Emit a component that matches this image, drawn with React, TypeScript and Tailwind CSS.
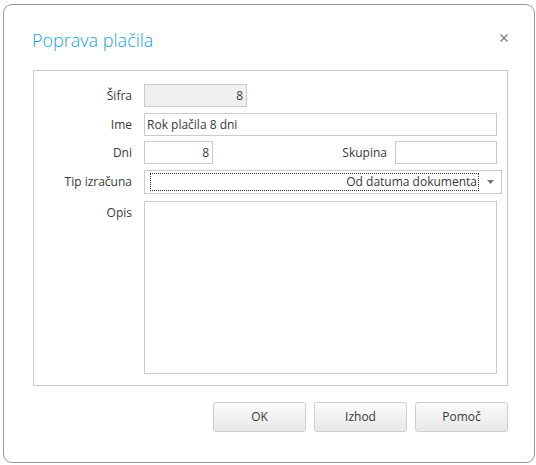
import * as React from 'react';

const font = { fontFamily: '"Open Sans", "Noto Sans", sans-serif' };

function Field({ label, children, className = '' }: { label: string; children: React.ReactNode; className?: string }) {
	return (
		<div className={`flex items-start ${className}`}>
			<div className="w-[99px] shrink-0 pr-[1px] text-right leading-[23px]">{label}</div>
			<div className="ml-[11px] flex w-[353px] items-start">{children}</div>
		</div>
	);
}

function Button({ children }: { children: React.ReactNode }) {
	return (
		<button className="h-[30px] w-[93px] rounded-[3px] border border-[#cfcfcf] bg-gradient-to-b from-[#fbfbfb] to-[#e8e8e8] text-[12px] text-[#3a3a3a]">
			{children}
		</button>
	);
}

export default function App() {
	return (
		<div className="h-[465px] w-[536px] bg-white pl-[3px] pt-[4px] text-[12px] text-[#3a3a3a]" style={font}>
			<div className="flex h-[459px] w-[532px] flex-col rounded-[9px] border border-[#9a9a9a] bg-white">
				{/* header */}
				<div className="flex h-[65px] items-start justify-between pl-[28px] pr-[26px] pt-[22px]">
					<h1 className="text-[18px] font-light leading-[26px] text-[#1ba1e2]">Poprava plačila</h1>
					<svg className="mt-[7px]" width="8" height="8" viewBox="0 0 8 8">
						<path d="M0.5 0.5l7 7M7.5 0.5l-7 7" stroke="#8a8a8a" strokeWidth="1.5" />
					</svg>
				</div>

				{/* form panel */}
				<div className="ml-[29px] flex h-[316px] w-[475px] flex-col border border-[#c9c9c9] pt-[13px]">
					<Field label="Šifra">
						<div className="h-[23px] w-[103px] border border-[#cbcbcb] bg-[#f0f0f0] pr-[3px] text-right leading-[21px]">8</div>
					</Field>
					<Field label="Ime" className="mt-[6px]">
						<div className="h-[23px] w-[353px] border border-[#cbcbcb] pl-[2px] leading-[21px]">Rok plačila 8 dni</div>
					</Field>
					<Field label="Dni" className="mt-[5px]">
						<div className="h-[23px] w-[69px] border border-[#cbcbcb] pr-[3px] text-right leading-[21px]">8</div>
						<div className="ml-auto leading-[23px]">Skupina</div>
						<div className="ml-[8px] h-[23px] w-[102px] border border-[#cbcbcb]" />
					</Field>
					<Field label="Tip izračuna" className="mt-[6px]">
						<div className="flex h-[24px] w-[358px] shrink-0 items-center border border-[#cbcbcb] pl-[5px]">
							<div className="flex h-[18px] flex-1 items-center justify-end border border-dotted border-[#333] pr-[1px]">
								Od datuma dokumenta
							</div>
							<div className="flex w-[22px] justify-center">
								<svg width="7" height="4" viewBox="0 0 7 4">
									<path d="M0 0h7L3.5 4z" fill="#777" />
								</svg>
							</div>
						</div>
					</Field>
					<Field label="Opis" className="mt-[7px]">
						<div className="h-[173px] w-[353px] border border-[#cbcbcb]" />
					</Field>
				</div>

				{/* actions */}
				<div className="ml-[209px] mt-[16px] flex gap-[8px]">
					<Button>OK</Button>
					<Button>Izhod</Button>
					<Button>Pomoč</Button>
				</div>
			</div>
		</div>
	);
}
